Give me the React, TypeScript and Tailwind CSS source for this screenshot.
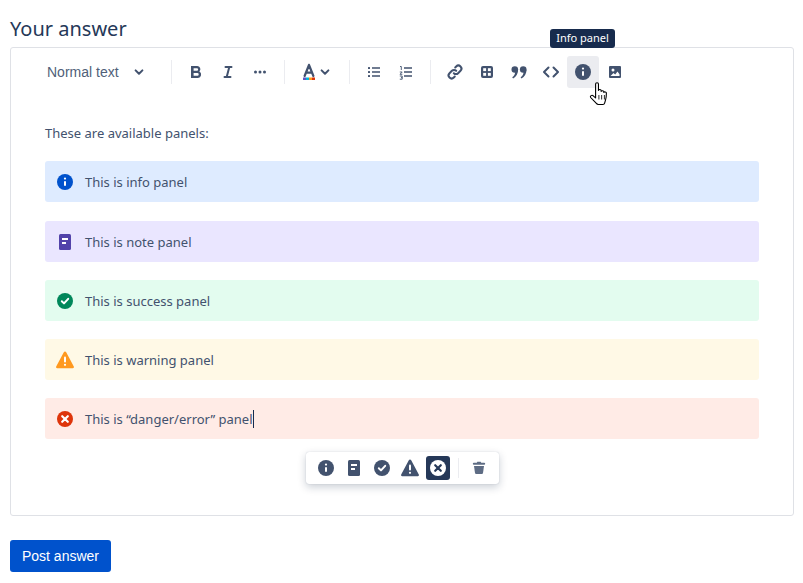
import type { ReactNode } from "react";

const ICON = "#42526E";

function Glyph({ children, size = 24 }: { children: ReactNode; size?: number }) {
  return (
    <svg width={size} height={size} viewBox="0 0 24 24" fill="none" className="block">
      {children}
    </svg>
  );
}

function InfoIcon({ color = ICON }: { color?: string }) {
  return (
    <Glyph>
      <circle cx="12" cy="12" r="8" fill={color} />
      <rect x="11" y="11" width="2" height="5" rx="1" fill="#fff" />
      <circle cx="12" cy="8.600" r="1.100" fill="#fff" />
    </Glyph>
  );
}

function NoteIcon({ color = ICON }: { color?: string }) {
  return (
    <Glyph>
      <rect x="6" y="4" width="12" height="16" rx="1.500" fill={color} />
      <rect x="9" y="8" width="6" height="2" fill="#fff" />
      <rect x="9" y="12" width="4" height="2" fill="#fff" />
    </Glyph>
  );
}

function SuccessIcon({ color = ICON }: { color?: string }) {
  return (
    <Glyph>
      <circle cx="12" cy="12" r="8" fill={color} />
      <path d="M8.800 12.200l2.200 2.200 4.200-4.600" stroke="#fff" strokeWidth="2" strokeLinecap="round" strokeLinejoin="round" />
    </Glyph>
  );
}

function WarningIcon({ color = ICON }: { color?: string }) {
  return (
    <Glyph>
      <path d="M12 3.600c.5 0 .9.3 1.200.7l7.600 14.200c.4.8-.1 1.700-1 1.700H4.200c-.9 0-1.400-.9-1-1.700l7.600-14.200c.3-.4.7-.7 1.200-.7z" fill={color} />
      <rect x="11" y="8.500" width="2" height="6" rx="1" fill="#fff" />
      <circle cx="12" cy="16.800" r="1.100" fill="#fff" />
    </Glyph>
  );
}

function ErrorIcon({ color = ICON, mark = "#fff" }: { color?: string; mark?: string }) {
  return (
    <Glyph>
      <circle cx="12" cy="12" r="8" fill={color} />
      <path d="M9.200 9.200l5.600 5.600M14.800 9.200l-5.600 5.600" stroke={mark} strokeWidth="2.200" strokeLinecap="round" />
    </Glyph>
  );
}

function Chevron() {
  return (
    <Glyph>
      <path d="M8.600 10.400l3.400 3.400 3.400-3.400" stroke={ICON} strokeWidth="2" strokeLinecap="round" strokeLinejoin="round" />
    </Glyph>
  );
}

function Divider() {
  return <div className="mx-2 h-6 w-px bg-[#ebecf0]" />;
}

function ToolBtn({ children, active }: { children: ReactNode; active?: boolean }) {
  return (
    <div className={`flex h-8 w-8 items-center justify-center rounded-[3px] ${active ? "bg-[#ebecf0]" : ""}`}>
      {children}
    </div>
  );
}

function FloatBtn({ children }: { children: ReactNode }) {
  return <div className="mr-1 flex h-6 w-6 items-center justify-center">{children}</div>;
}

function Panel({ bg, icon, children }: { bg: string; icon: ReactNode; children: ReactNode }) {
  return (
    <div className={`flex h-[41px] items-center rounded-[3px] pl-2 text-[13px] text-[#42526e] ${bg}`}>
      <div className="mr-2 w-6">{icon}</div>
      <div className="pt-0.5">{children}</div>
    </div>
  );
}

export default function App() {
  return (
    <div className="relative h-[583px] w-[803px] overflow-hidden bg-white px-2.5 font-['Noto_Sans','Open_Sans',sans-serif] text-[#172b4d]">
      <h2 className="pt-[15px] text-[20px] leading-[27px] text-[#253858]">Your answer</h2>

      <div className="mt-[5px] h-[469px] w-[784px] rounded-[3px] border border-[#dfe1e6]">
        <div className="flex h-12 items-center pl-9">
          <span className="w-[72px] whitespace-nowrap font-['Liberation_Sans',sans-serif] text-[14px] text-[#505f79]">
            Normal text
          </span>
          <div className="ml-2">
            <Chevron />
          </div>
          <div className="ml-[12px]" />
          <Divider />
          <ToolBtn>
            <Glyph>
              <path d="M7 6h6.200a3.200 3.200 0 0 1 2.200 5.500A3.500 3.500 0 0 1 14 18H7V6zm2.600 2.300v2.500h3.300a1.250 1.250 0 0 0 0-2.500H9.600zm0 4.800v2.600h3.800a1.300 1.300 0 0 0 0-2.600H9.600z" fill={ICON} />
            </Glyph>
          </ToolBtn>
          <ToolBtn>
            <Glyph>
              <path d="M9.500 7h6M8.500 17h6M13.300 7l-2.600 10" stroke={ICON} strokeWidth="2" strokeLinecap="round" />
            </Glyph>
          </ToolBtn>
          <ToolBtn>
            <Glyph>
              <circle cx="7.500" cy="12" r="1.500" fill={ICON} />
              <circle cx="12" cy="12" r="1.500" fill={ICON} />
              <circle cx="16.500" cy="12" r="1.500" fill={ICON} />
            </Glyph>
          </ToolBtn>
          <Divider />
          <div className="flex h-8 w-[48px] items-center">
            <div className="ml-1">
              <Glyph>
                <path d="M12 5l-4.400 11M12 5l4.400 11M9.200 12.600h5.600" stroke={ICON} strokeWidth="2.200" strokeLinecap="round" />
                <rect x="6" y="17.500" width="3" height="2.500" fill="#6554c0" />
                <rect x="9" y="17.500" width="3" height="2.500" fill="#00b8d9" />
                <rect x="12" y="17.500" width="3" height="2.500" fill="#ff991f" />
                <rect x="15" y="17.500" width="3" height="2.500" fill="#de350b" />
              </Glyph>
            </div>
            <div className="-ml-2">
              <Chevron />
            </div>
          </div>
          <Divider />
          <ToolBtn>
            <Glyph>
              <rect x="6" y="7" width="2" height="2" rx="0.500" fill={ICON} />
              <rect x="6" y="11" width="2" height="2" rx="0.500" fill={ICON} />
              <rect x="6" y="15" width="2" height="2" rx="0.500" fill={ICON} />
              <path d="M10 8h8M10 12h8M10 16h8" stroke={ICON} strokeWidth="1.500" />
            </Glyph>
          </ToolBtn>
          <ToolBtn>
            <Glyph>
              <path d="M6 6.500h1.300V10M5.800 12h2.400L6 14.300h2.300M5.800 16h2.400v3.200H5.800M7 17.600h1.200" stroke={ICON} strokeWidth="0.900" />
              <path d="M10 8h8M10 12h8M10 16h8" stroke={ICON} strokeWidth="1.500" />
            </Glyph>
          </ToolBtn>
          <Divider />
          <ToolBtn>
            <Glyph>
              <path d="M10.800 13.200a3 3 0 0 0 4.300 0l2.400-2.400a3 3 0 0 0-4.300-4.300l-1 1" stroke={ICON} strokeWidth="2" strokeLinecap="round" />
              <path d="M13.200 10.800a3 3 0 0 0-4.300 0l-2.400 2.400a3 3 0 0 0 4.300 4.300l1-1" stroke={ICON} strokeWidth="2" strokeLinecap="round" />
            </Glyph>
          </ToolBtn>
          <ToolBtn>
            <Glyph>
              <rect x="6" y="6" width="12" height="12" rx="2" fill={ICON} />
              <rect x="8.200" y="8.200" width="2.900" height="2.900" fill="#fff" />
              <rect x="12.900" y="8.200" width="2.900" height="2.900" fill="#fff" />
              <rect x="8.200" y="12.900" width="2.900" height="2.900" fill="#fff" />
              <rect x="12.900" y="12.900" width="2.900" height="2.900" fill="#fff" />
            </Glyph>
          </ToolBtn>
          <ToolBtn>
            <Glyph>
              <circle cx="7.800" cy="9.500" r="3.300" fill={ICON} />
              <path d="M11.100 9.500c0 4.300-2 7.500-5 9l-.9-1.200c1.900-1.300 3-3.200 3-5.800z" fill={ICON} />
              <circle cx="16.200" cy="9.500" r="3.300" fill={ICON} />
              <path d="M19.500 9.500c0 4.300-2 7.500-5 9l-.9-1.200c1.900-1.300 3-3.200 3-5.800z" fill={ICON} />
            </Glyph>
          </ToolBtn>
          <ToolBtn>
            <Glyph>
              <path d="M9.500 7.500L5 12l4.500 4.500M14.500 7.500L19 12l-4.500 4.500" stroke={ICON} strokeWidth="2" strokeLinecap="round" strokeLinejoin="round" />
            </Glyph>
          </ToolBtn>
          <ToolBtn active>
            <InfoIcon />
          </ToolBtn>
          <ToolBtn>
            <Glyph>
              <rect x="6" y="6" width="12" height="12" rx="1" fill={ICON} />
              <circle cx="10" cy="10" r="1.500" fill="#fff" />
              <path d="M7.500 16l3-3 1.700 1.500 2.300-3 2 2.800V16z" fill="#fff" />
            </Glyph>
          </ToolBtn>
        </div>

        <div className="px-[34px] pt-[27px]">
          <p className="text-[13px] leading-5 text-[#42526e]">These are available panels:</p>
          <div className="mt-[18px] flex flex-col gap-[18px]">
            <Panel bg="bg-[#deebff]" icon={<InfoIcon color="#0052cc" />}>This is info panel</Panel>
            <div className="mt-px">
              <Panel bg="bg-[#eae6ff]" icon={<NoteIcon color="#5243aa" />}>This is note panel</Panel>
            </div>
            <Panel bg="bg-[#e3fcef]" icon={<SuccessIcon color="#00875a" />}>This is success panel</Panel>
            <Panel bg="bg-[#fff9e6]" icon={<WarningIcon color="#ff991f" />}>This is warning panel</Panel>
            <Panel bg="bg-[#ffebe6]" icon={<ErrorIcon color="#de350b" />}>
              This is “danger/error” panel<span className="-mb-1 inline-block h-[18px] w-px bg-[#172b4d]" />
            </Panel>
          </div>

          <div className="mx-auto mt-[13px] flex h-8 w-[193px] items-center rounded-[3px] bg-white pl-2 shadow-[0_3px_8px_rgba(9,30,66,0.22),0_0_1px_rgba(9,30,66,0.25)]">
            <FloatBtn><InfoIcon /></FloatBtn>
            <FloatBtn><NoteIcon /></FloatBtn>
            <FloatBtn><SuccessIcon /></FloatBtn>
            <FloatBtn><WarningIcon /></FloatBtn>
            <div className="flex h-6 w-6 items-center justify-center rounded-[3px] bg-[#253858]">
              <ErrorIcon color="#fff" mark="#253858" />
            </div>
            <div className="mx-2 h-5 w-px bg-[#ebecf0]" />
            <div className="flex h-6 w-6 items-center justify-center">
              <Glyph>
                <rect x="5.800" y="6.800" width="12.400" height="2" rx="1" fill="#5e6c84" />
                <path d="M9.800 7l.5-1.300h3.400l.5 1.300z" fill="#5e6c84" />
                <path d="M7 10h10l-1 7c-.1.6-.5 1-1.100 1H9.100c-.6 0-1-.4-1.100-1z" fill="#5e6c84" />
              </Glyph>
            </div>
          </div>
        </div>
      </div>

      <button
        type="button"
        className="mt-6 flex h-8 w-[101px] items-center justify-center rounded-[3px] bg-[#0052cc] font-['Liberation_Sans',sans-serif] text-[14px] text-white"
      >
        Post answer
      </button>

      <div className="absolute left-[550px] top-[29px] flex h-[19px] w-[65px] items-center justify-center rounded-[3px] bg-[#172b4d] text-[11px] text-white">
        Info panel
      </div>

      <svg width="22" height="25" viewBox="0 0 20 25" preserveAspectRatio="none" className="absolute left-[589px] top-[82px]">
        <path
          d="M6 2c0-1.600 2.600-1.600 2.600 0v6.500c.2-1.300 2.400-1.300 2.500.2v.8c.3-1.200 2.300-1.100 2.400.3v.7c.4-1 2.300-.8 2.300.6 0 3-.1 5.200-.8 7l-.8 3c-.2.800-.7 1.300-1.500 1.300H8.500c-.8 0-1.300-.3-1.800-1L1.500 15.500c-.9-1.500 1.100-3 2.400-1.700L6 16V2z"
          fill="#fff"
          stroke="#000"
          strokeWidth="1"
          strokeLinejoin="round"
        />
        <path d="M9 13v4.500M11.500 13v4.500M14 13v4.500" stroke="#000" strokeWidth="0.800" />
      </svg>
    </div>
  );
}
